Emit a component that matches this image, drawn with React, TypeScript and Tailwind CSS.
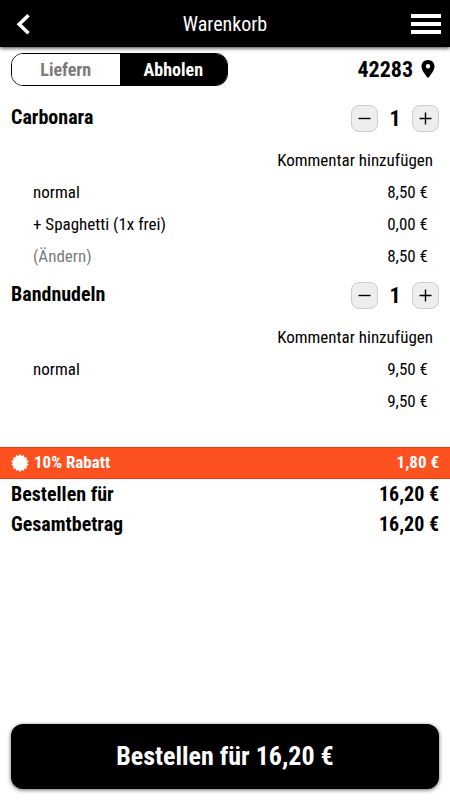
import { useState } from "react";

type Line = { label: string; price: string; muted?: boolean };
type Item = { name: string; lines: Line[] };

const ITEMS: Item[] = [
  {
    name: "Carbonara",
    lines: [
      { label: "normal", price: "8,50 €" },
      { label: "+ Spaghetti (1x frei)", price: "0,00 €" },
      { label: "(Ändern)", price: "8,50 €", muted: true },
    ],
  },
  {
    name: "Bandnudeln",
    lines: [
      { label: "normal", price: "9,50 €" },
      { label: "", price: "9,50 €" },
    ],
  },
];

// zackiger Stern mit 14 Spitzen
const BADGE_POINTS = Array.from({ length: 28 }, (_, i) => {
  const r = i % 2 === 0 ? 9 : 7.1;
  const a = (i * Math.PI) / 14;
  return `${(9 + r * Math.sin(a)).toFixed(2)},${(9 - r * Math.cos(a)).toFixed(2)}`;
}).join(" ");

function Header() {
  return (
    <header className="flex h-[47px] items-center justify-between bg-black px-2 text-white shadow-[0_1px_4px_rgba(0,0,0,0.8)]">
      <button aria-label="Zurück" className="flex w-8 justify-center">
        <svg width="32" height="32" viewBox="0 0 32 32" fill="none" stroke="currentColor" strokeWidth="3.6">
          <path d="M20.5 7.2L11.2 16.2l9.3 9" />
        </svg>
      </button>
      <h1 className="text-xl">Warenkorb</h1>
      <button aria-label="Menü" className="flex w-8 justify-center">
        <svg width="32" height="22" viewBox="0 0 32 22" fill="currentColor">
          <path d="M1 1h30v4H1zM1 9h30v4H1zM1 17h30v4H1z" />
        </svg>
      </button>
    </header>
  );
}

function DeliverySwitch() {
  const [mode, setMode] = useState("Abholen");
  return (
    <div className="flex h-[33px] w-[217px] overflow-hidden rounded-xl border border-black text-lg font-bold">
      {["Liefern", "Abholen"].map((m) => (
        <button
          key={m}
          aria-pressed={m === mode}
          onClick={() => setMode(m)}
          className={m === mode ? "flex-1 bg-black text-white" : "flex-1 bg-white text-[#7b7b7b]"}
        >
          {m}
        </button>
      ))}
    </div>
  );
}

function StepButton({ label, path, onClick }: { label: string; path: string; onClick: () => void }) {
  return (
    <button
      aria-label={label}
      onClick={onClick}
      className="flex size-[27px] items-center justify-center rounded-lg border border-[#cccccc] bg-[#eeeeee]"
    >
      <svg width="13" height="13" viewBox="0 0 13 13" stroke="black" strokeWidth="1.4">
        <path d={path} />
      </svg>
    </button>
  );
}

function CartItem({ item }: { item: Item }) {
  const [count, setCount] = useState(1);
  return (
    <section className="mb-[6px]">
      <div className="mb-[11px] flex h-8 items-center justify-between">
        <h2 className="pb-[2px] text-xl font-bold">{item.name}</h2>
        <div className="flex items-center">
          <StepButton label="Weniger" path="M.5 6.5h12" onClick={() => setCount(Math.max(0, count - 1))} />
          <span className="w-[34px] text-center text-[22px] font-bold">{count}</span>
          <StepButton label="Mehr" path="M.5 6.5h12M6.5 .5v12" onClick={() => setCount(count + 1)} />
        </div>
      </div>
      <div className="flex h-8 items-center justify-end pr-[6px]">
        <button>Kommentar hinzufügen</button>
      </div>
      <ul className="pr-[11px] pl-[22px]">
        {item.lines.map((line, i) => (
          <li key={i} className="flex h-8 items-center justify-between">
            {line.muted ? <button className="text-[#7b7b7b]">{line.label}</button> : <span>{line.label}</span>}
            <span>{line.price}</span>
          </li>
        ))}
      </ul>
    </section>
  );
}

export default function App() {
  return (
    <div className="flex min-h-screen flex-col bg-white font-['Roboto_Condensed','Liberation_Sans_Narrow',Roboto,sans-serif] text-[17px] text-black">
      <Header />
      <main className="flex grow flex-col">
        <div className="flex items-start justify-between px-[11px] pt-[6px] pb-4">
          <DeliverySwitch />
          <button className="flex h-8 items-center gap-2 pr-1 text-[22px] font-bold">
            42283
            <svg width="14" height="18" viewBox="0 0 14 18" fill="currentColor">
              <path
                fillRule="evenodd"
                d="M7 0C3.1 0 .5 2.8.5 6.4.5 10.9 7 18 7 18s6.5-7.1 6.5-11.6C13.5 2.8 10.9 0 7 0zm0 4.1a2.2 2.2 0 1 1 0 4.4a2.2 2.2 0 0 1 0-4.4z"
              />
            </svg>
          </button>
        </div>

        <div className="px-[11px] pb-[23px]">
          {ITEMS.map((item) => (
            <CartItem key={item.name} item={item} />
          ))}
        </div>

        <div className="flex h-8 items-center justify-between border-y border-[#f9330b] bg-[#fd521f] px-[11px] font-bold text-white">
          <span className="flex items-center gap-[5px]">
            <svg width="18" height="18" viewBox="0 0 18 18" fill="currentColor">
              <polygon points={BADGE_POINTS} />
            </svg>
            10% Rabatt
          </span>
          <span>1,80 €</span>
        </div>
        <dl className="px-[11px] text-xl font-bold">
          <div className="flex h-[30px] items-center justify-between">
            <dt>Bestellen für</dt>
            <dd>16,20 €</dd>
          </div>
          <div className="flex h-[30px] items-center justify-between">
            <dt>Gesamtbetrag</dt>
            <dd>16,20 €</dd>
          </div>
        </dl>

        <div className="mt-auto px-[11px] pt-6 pb-[11px]">
          <button className="h-[65px] w-full rounded-xl bg-black text-[26px] font-bold text-white shadow-[0_1px_4px_rgba(0,0,0,0.6)]">
            Bestellen für 16,20 €
          </button>
        </div>
      </main>
    </div>
  );
}
